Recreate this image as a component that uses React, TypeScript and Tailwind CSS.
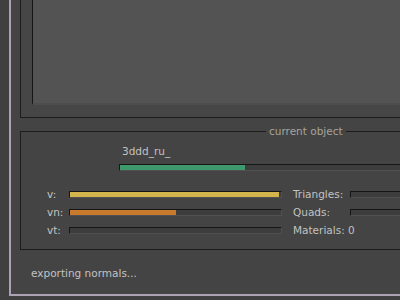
import React from "react";

type BarProps = {
  pct: number;
  fill: string;
  className?: string;
};

// Sunken progress bar: dark top/left edge, lighter bottom/right edge
const Bar = ({ pct, fill, className }: BarProps) => (
  <div
    className={`h-[7px] border border-t-[#161616] border-l-[#161616] border-b-[#505050] border-r-[#505050] bg-[#3d3d3d] ${className ?? ""}`}
  >
    <div className={`h-full ${fill}`} style={{ width: `${pct}%` }} />
  </div>
);

const rows = [
  { label: "v:", pct: 99, fill: "bg-[#d4b44c]", stat: "Triangles:", bar: true },
  { label: "vn:", pct: 50, fill: "bg-[#c8792c]", stat: "Quads:", bar: true },
  { label: "vt:", pct: 0, fill: "bg-transparent", stat: "Materials: 0", bar: false },
];

const App = () => {
  return (
    <div className="w-[400px] h-[300px] overflow-hidden bg-[#404040] font-['DejaVu_Sans',sans-serif] text-[10.5px] leading-[12px] text-[#c2c2c2]">
      <div className="ml-[9px] h-[296px] w-[620px] border-l-2 border-b-2 border-[#aca2b4] bg-[#444444] pl-[9px] flex flex-col">
        {/* top viewport group */}
        <div className="h-[118px] border-l border-b border-[#1c1c1c] bg-[#464646] pl-[11px] pb-[12px] flex">
          <div className="flex-1 border-l border-[#151515] border-b-2 border-b-[#4d4d4d] bg-[#535353]" />
        </div>

        {/* current object group */}
        <div className="relative mt-[13px] h-[119px] border border-[#1c1c1c] flex flex-col">
          <span className="absolute top-[-7px] left-[245px] px-[3px] bg-[#444444] text-[#a8a39a]">
            current object
          </span>

          <div className="mt-[13px] ml-[101px]">3ddd_ru_</div>
          <Bar pct={25} fill="bg-[#3e9a6c]" className="mt-[7px] ml-[98px] w-[500px]" />

          <div className="mt-[14px] ml-[26px] flex flex-col">
            {rows.map((r) => (
              <div key={r.label} className="h-[18px] flex items-center whitespace-nowrap">
                <span className="w-[22px]">{r.label}</span>
                <Bar pct={r.pct} fill={r.fill} className="w-[213px]" />
                <span className="ml-[11px] w-[57px]">{r.stat}</span>
                {r.bar && <Bar pct={0} fill="bg-transparent" className="w-[200px]" />}
              </div>
            ))}
          </div>
        </div>

        <div className="mt-[17px] ml-[11px]">exporting normals...</div>
      </div>
    </div>
  );
};

export default App;
